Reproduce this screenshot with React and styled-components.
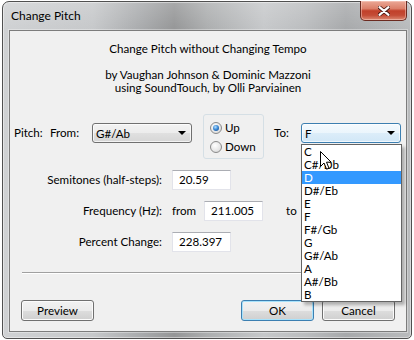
import React from "react";
import styled, { createGlobalStyle } from "styled-components";

const GlobalStyle = createGlobalStyle`
  html, body {
    margin: 0;
    background: #ffffff;
  }
  body {
    font-family: Lato, "Liberation Sans", sans-serif;
    font-size: 11.6px;
    color: #000;
  }
  * {
    box-sizing: border-box;
  }
`;

const Window = styled.div`
  width: 410px;
  height: 338px;
  margin: 1px 2px 0;
  display: flex;
  flex-direction: column;
  border: 1px solid #505050;
  border-radius: 7px 7px 5px 5px;
  background: linear-gradient(180deg, rgba(255, 255, 255, 0.18), rgba(255, 255, 255, 0) 28px),
    linear-gradient(
      90deg,
      #cfd1d3 0%,
      #c6c8ca 22%,
      #a8aaac 34%,
      #959697 42%,
      #acaeaf 50%,
      #c6c8ca 64%,
      #bbbdbf 74%,
      #a7a9ab 84%,
      #b9bbbd 100%
    );
  box-shadow: inset 0 0 0 1px rgba(255, 255, 255, 0.45);
`;

const TitleBar = styled.div`
  height: 28px;
  display: flex;
  align-items: flex-start;
  padding-left: 8px;
`;

const Title = styled.span`
  line-height: 28px;
  font-size: 12px;
  color: #000;
`;

const CloseButton = styled.div`
  margin: -1px 4px 0 auto;
  width: 47px;
  height: 20px;
  display: flex;
  align-items: center;
  justify-content: center;
  border: 1px solid #6b2a20;
  border-top: none;
  border-radius: 0 0 5px 5px;
  background: linear-gradient(180deg, #eba896 0%, #dc7f69 40%, #c1402a 52%, #c44c36 75%, #dc8a73 100%);
  box-shadow: inset 0 0 0 1px rgba(255, 220, 210, 0.45);
`;

const Client = styled.div`
  flex: 1;
  margin: 0 4px 6px 6px;
  border: 1px solid #7c7c7c;
  background: #f0f0f0;
  display: flex;
  flex-direction: column;
  box-shadow: 0 0 0 1px rgba(255, 255, 255, 0.35);
`;

const Intro = styled.div`
  padding-top: 11px;
  text-align: center;
  line-height: 13px;
`;

const IntroLine = styled.p`
  margin: 0 0 ${(p) => (p.$gap ? "13px" : "0")};
`;

const PitchRow = styled.div`
  margin-top: 29px;
  padding-left: 4px;
  height: 20px;
  display: grid;
  grid-template-columns: 36px 42px 111px 71px 27px 101px;
  align-items: center;
`;

const Label = styled.span`
  white-space: nowrap;
  line-height: 20px;
  text-align: ${(p) => (p.$right ? "right" : "left")};
  width: ${(p) => (p.$w ? `${p.$w}px` : "auto")};
`;

const ComboWrap = styled.div`
  position: relative;
  width: 100px;
  height: 20px;
`;

const Combo = styled.div`
  height: 20px;
  display: flex;
  align-items: center;
  justify-content: space-between;
  padding: 0 5px 0 3px;
  border: 1px solid ${(p) => (p.$open ? "#3c7fb1" : "#707070")};
  border-radius: 3px;
  background: ${(p) =>
    p.$open
      ? "linear-gradient(180deg, #f4fafe 0%, #ebf5fc 50%, #dcedf9 51%, #d1e7f7 100%)"
      : "linear-gradient(180deg, #f3f3f3 0%, #ececec 50%, #e0e0e0 51%, #d6d6d6 100%)"};
  box-shadow: inset 0 0 0 1px rgba(255, 255, 255, 0.7);
`;

const Arrow = styled.span`
  width: 0;
  height: 0;
  border-left: 4px solid transparent;
  border-right: 4px solid transparent;
  border-top: 4px solid #000;
`;

const RadioBox = styled.div`
  width: 61px;
  height: 45px;
  margin: -9px 0 -16px;
  padding: 3px 0 2px 6px;
  border: 1px solid #d5dfe5;
  border-radius: 3px;
`;

const RadioItem = styled.label`
  height: 19px;
  display: flex;
  align-items: center;
  gap: 3px;
`;

const RadioDot = styled.span`
  position: relative;
  width: 12px;
  height: 12px;
  border-radius: 50%;
  border: 1px solid #8a8a8a;
  background: radial-gradient(circle at 40% 35%, #ffffff 0%, #e6e6e6 60%, #cfcfcf 100%);

  &::after {
    content: "";
    display: ${(p) => (p.$checked ? "block" : "none")};
    position: absolute;
    left: 2px;
    top: 2px;
    width: 6px;
    height: 6px;
    border-radius: 50%;
    background: radial-gradient(circle at 40% 35%, #b4e0ff 0%, #3d8ad6 45%, #0d3f80 100%);
  }
`;

const DropList = styled.ul`
  position: absolute;
  top: calc(100% + 1px);
  left: 0;
  width: 101px;
  margin: 0;
  padding: 0;
  list-style: none;
  border: 1px solid #646464;
  background: #fff;
  box-shadow: 3px 3px 3px rgba(0, 0, 0, 0.28);
  z-index: 5;
`;

const DropItem = styled.li`
  height: 13px;
  line-height: 13px;
  padding-left: 2px;
  background: ${(p) => (p.$active ? "#3399ff" : "transparent")};
  color: ${(p) => (p.$active ? "#fff" : "#000")};
`;

const Cursor = styled.svg`
  position: absolute;
  left: 19px;
  top: 28px;
  z-index: 6;
`;

const FieldGrid = styled.div`
  margin-top: 27px;
  display: grid;
  grid-template-columns: 152px auto;
  grid-auto-rows: 20px;
  column-gap: 10px;
  row-gap: 11px;
  align-items: center;
`;

const FieldLine = styled.div`
  display: flex;
  align-items: center;
`;

const TextBox = styled.div`
  width: 59px;
  height: 20px;
  padding-left: 6px;
  line-height: 18px;
  background: #fff;
  border: 1px solid #e2e3ea;
  border-top-color: #abadb3;
`;

const Separator = styled.div`
  margin: 20px 12px 0;
  height: 2px;
  border-top: 1px solid #a0a0a0;
  border-bottom: 1px solid #ffffff;
`;

const ButtonRow = styled.div`
  margin-top: 26px;
  padding: 0 11px;
  display: flex;
  justify-content: space-between;
`;

const ButtonGroup = styled.div`
  display: flex;
  gap: 8px;
`;

const Button = styled.div`
  width: 73px;
  height: 21px;
  display: flex;
  align-items: center;
  justify-content: center;
  border: 1px solid ${(p) => (p.$default ? "#3c7fb1" : "#707070")};
  border-radius: 3px;
  background: linear-gradient(180deg, #f2f2f2 0%, #ebebeb 50%, #dddddd 51%, #cfcfcf 100%);
  box-shadow: inset 0 0 0 1px ${(p) => (p.$default ? "#a8e2fb" : "#fbfbfb")};
`;

const notes = ["C", "C#/Db", "D", "D#/Eb", "E", "F", "F#/Gb", "G", "G#/Ab", "A", "A#/Bb", "B"];

export default function App() {
  return (
    <>
      <GlobalStyle />
      <Window>
        <TitleBar>
          <Title>Change Pitch</Title>
          <CloseButton>
            <svg width="12" height="10" viewBox="0 0 12 10">
              <path
                d="M1 1 L11 9 M11 1 L1 9"
                stroke="#4a1a14"
                strokeWidth="4"
                strokeLinecap="round"
              />
              <path
                d="M1.5 1.2 L10.5 8.8 M10.5 1.2 L1.5 8.8"
                stroke="#ffffff"
                strokeWidth="2.2"
                strokeLinecap="round"
              />
            </svg>
          </CloseButton>
        </TitleBar>
        <Client>
          <Intro>
            <IntroLine $gap>Change Pitch without Changing Tempo</IntroLine>
            <IntroLine>by Vaughan Johnson &amp; Dominic Mazzoni</IntroLine>
            <IntroLine>using SoundTouch, by Olli Parviainen</IntroLine>
          </Intro>

          <PitchRow>
            <Label>Pitch:</Label>
            <Label>From:</Label>
            <ComboWrap>
              <Combo>
                <span>G#/Ab</span>
                <Arrow />
              </Combo>
            </ComboWrap>
            <RadioBox>
              <RadioItem>
                <RadioDot $checked />
                Up
              </RadioItem>
              <RadioItem>
                <RadioDot />
                Down
              </RadioItem>
            </RadioBox>
            <Label>To:</Label>
            <ComboWrap>
              <Combo $open>
                <span>F</span>
                <Arrow />
              </Combo>
              <DropList>
                {notes.map((n) => (
                  <DropItem key={n} $active={n === "D"}>
                    {n}
                  </DropItem>
                ))}
              </DropList>
              <Cursor width="13" height="20" viewBox="0 0 13 20">
                <path
                  d="M0.5 0.5 L0.5 15.5 L4 12 L6.6 18.2 L9 17.2 L6.5 11.2 L11.2 11.2 Z"
                  fill="#ffffff"
                  stroke="#000000"
                  strokeWidth="1"
                  strokeLinejoin="round"
                />
              </Cursor>
            </ComboWrap>
          </PitchRow>

          <FieldGrid>
            <Label $right>Semitones (half-steps):</Label>
            <FieldLine>
              <TextBox>20.59</TextBox>
            </FieldLine>
            <Label $right>Frequency (Hz):</Label>
            <FieldLine>
              <Label $w={32}>from</Label>
              <TextBox>211.005</TextBox>
              <Label $w={36} style={{ paddingLeft: 23 }}>to</Label>
            </FieldLine>
            <Label $right>Percent Change:</Label>
            <FieldLine>
              <TextBox>228.397</TextBox>
            </FieldLine>
          </FieldGrid>

          <Separator />

          <ButtonRow>
            <Button>Preview</Button>
            <ButtonGroup>
              <Button $default>OK</Button>
              <Button>Cancel</Button>
            </ButtonGroup>
          </ButtonRow>
        </Client>
      </Window>
    </>
  );
}
